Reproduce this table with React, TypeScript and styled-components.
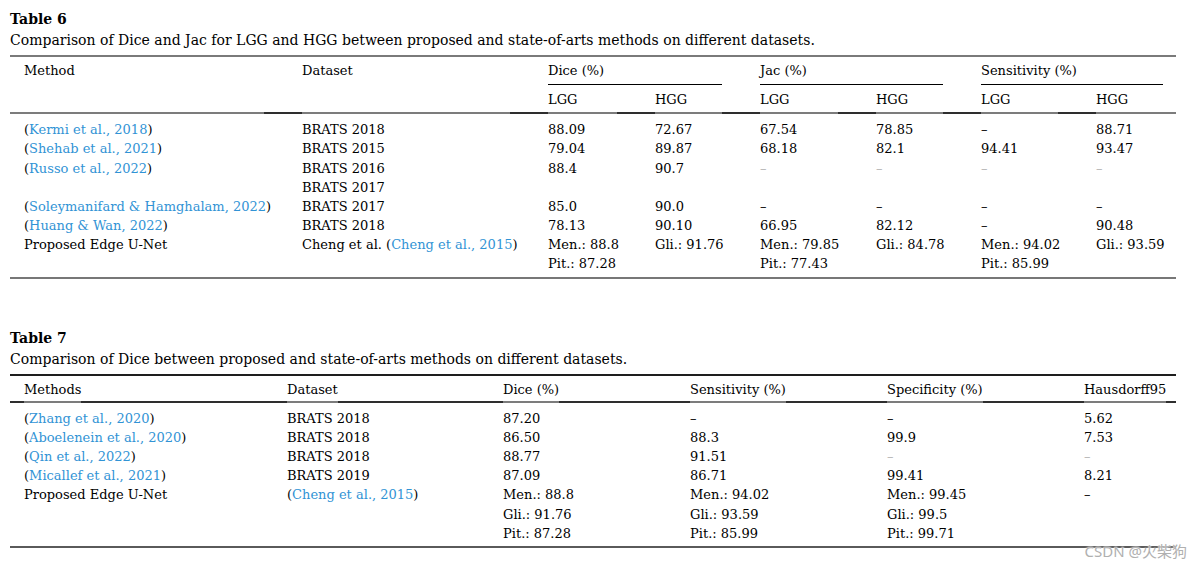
import React from "react";
import styled, { createGlobalStyle } from "styled-components";

const GlobalStyle = createGlobalStyle`
  html, body { margin: 0; padding: 0; background: #fff; }
  body { font-family: "DejaVu Serif", "Liberation Serif", serif; color: #000; }
`;

const Page = styled.main`
  position: relative;
  width: 1199px;
  height: 570px;
  box-sizing: border-box;
  padding: 9px 23px 0 10px;
  overflow: hidden;
`;

const Section = styled.section<{ $gap?: number }>`
  margin-top: ${(p) => p.$gap ?? 0}px;
`;

const Title = styled.h2`
  margin: 0;
  font-size: 14px;
  font-weight: bold;
  line-height: 20px;
`;

const Caption = styled.p`
  margin: 0 0 4px;
  font-size: 14px;
  line-height: 22px;
`;

const Table = styled.table<{ $top: string; $bottom: string }>`
  width: 1166px;
  table-layout: fixed;
  border-collapse: separate;
  border-spacing: 0;
  font-size: 13px;
  line-height: 19.15px;
  border-top: 2px solid ${(p) => p.$top};
  border-bottom: 2px solid ${(p) => p.$bottom};
`;

const Col = styled.col<{ $w: number }>`
  width: ${(p) => p.$w}px;
`;

const HeadCell = styled.th<{
  $pl?: number;
  $pr?: number;
  $pt?: number;
  $pb?: number;
  $rule?: boolean;
  $grayGap?: number | null;
}>`
  text-align: left;
  font-weight: normal;
  vertical-align: top;
  white-space: nowrap;
  padding: ${(p) => p.$pt ?? 0}px ${(p) => p.$pr ?? 38}px ${(p) => p.$pb ?? 0}px
    ${(p) => p.$pl ?? 0}px;
  background: ${(p) =>
    !p.$rule
      ? "none"
      : p.$grayGap == null
      ? "linear-gradient(#2e2e2e, #2e2e2e) left bottom / 100% 2px no-repeat"
      : `linear-gradient(#7c7c7c, #7c7c7c) left bottom / calc(100% - ${p.$grayGap}px) 2px no-repeat,
         linear-gradient(#2e2e2e, #2e2e2e) left bottom / 100% 2px no-repeat`};
`;

const GroupLabel = styled.span`
  display: block;
  padding-bottom: 4px;
  border-bottom: 1px solid #000;
`;

const UnderLabel = styled.span`
  display: inline-block;
  padding-bottom: 4px;
  margin-bottom: -4px;
  background: linear-gradient(#7c7c7c, #7c7c7c) left bottom / 100% 2px no-repeat;
`;

const Body = styled.tbody`
  tr:first-child > td {
    padding-top: 6px;
  }
  tr:last-child > td {
    padding-bottom: 3px;
  }
`;

const Td = styled.td<{ $pl?: number; $pr?: number }>`
  padding: 0 ${(p) => p.$pr ?? 38}px 0 ${(p) => p.$pl ?? 0}px;
  vertical-align: top;
  white-space: nowrap;
`;

const Line = styled.span`
  display: block;
`;

const Cite = styled.a`
  color: #3193d5;
  text-decoration: none;
`;

const Dash = styled.span<{ $faint?: boolean }>`
  color: ${(p) => (p.$faint ? "#b4b4b4" : "#000")};
`;

const Watermark = styled.div`
  position: absolute;
  right: 12px;
  bottom: 9px;
  font-family: "Noto Sans", "Noto Sans CJK SC", sans-serif;
  font-size: 15px;
  line-height: 20px;
  color: #b0b0b0;
  text-shadow: 0 0 2px #fff, 0 0 2px #fff;
`;

const cite = (text: string, pre = "") => (
  <>
    {pre}(<Cite href="#">{text}</Cite>)
  </>
);
const dash = <Dash>–</Dash>;
const faint = <Dash $faint>–</Dash>;

type Cell = React.ReactNode | React.ReactNode[];

function renderCell(c: Cell) {
  if (Array.isArray(c)) return c.map((l, i) => <Line key={i}>{l}</Line>);
  return c;
}

function BodyRows({ rows, lastPr }: { rows: Cell[][]; lastPr: number }) {
  return (
    <Body>
      {rows.map((row, r) => (
        <tr key={r}>
          {row.map((c, i) => (
            <Td key={i} $pl={i === 0 ? 14 : 0} $pr={i === row.length - 1 ? lastPr : 38}>
              {renderCell(c)}
            </Td>
          ))}
        </tr>
      ))}
    </Body>
  );
}

const t6Cols = [292, 246, 107, 105, 116, 105, 115, 80];
const t6Rows: Cell[][] = [
  [cite("Kermi et al., 2018"), "BRATS 2018", "88.09", "72.67", "67.54", "78.85", dash, "88.71"],
  [cite("Shehab et al., 2021"), "BRATS 2015", "79.04", "89.87", "68.18", "82.1", "94.41", "93.47"],
  [cite("Russo et al., 2022"), "BRATS 2016", "88.4", "90.7", faint, faint, faint, faint],
  ["", "BRATS 2017", "", "", "", "", "", ""],
  [cite("Soleymanifard & Hamghalam, 2022"), "BRATS 2017", "85.0", "90.0", dash, dash, dash, dash],
  [cite("Huang & Wan, 2022"), "BRATS 2018", "78.13", "90.10", "66.95", "82.12", dash, "90.48"],
  [
    "Proposed Edge U-Net",
    cite("Cheng et al., 2015", "Cheng et al. "),
    ["Men.: 88.8", "Pit.: 87.28"],
    "Gli.: 91.76",
    ["Men.: 79.85", "Pit.: 77.43"],
    "Gli.: 84.78",
    ["Men.: 94.02", "Pit.: 85.99"],
    "Gli.: 93.59",
  ],
];

const t7Cols = [277, 216, 187, 197, 197, 92];
const t7Head = ["Methods", "Dataset", "Dice (%)", "Sensitivity (%)", "Specificity (%)", "Hausdorff95"];
const t7Rows: Cell[][] = [
  [cite("Zhang et al., 2020"), "BRATS 2018", "87.20", dash, dash, "5.62"],
  [cite("Aboelenein et al., 2020"), "BRATS 2018", "86.50", "88.3", "99.9", "7.53"],
  [cite("Qin et al., 2022"), "BRATS 2018", "88.77", "91.51", faint, faint],
  [cite("Micallef et al., 2021"), "BRATS 2019", "87.09", "86.71", "99.41", "8.21"],
  [
    "Proposed Edge U-Net",
    cite("Cheng et al., 2015"),
    ["Men.: 88.8", "Gli.: 91.76", "Pit.: 87.28"],
    ["Men.: 94.02", "Gli.: 93.59", "Pit.: 85.99"],
    ["Men.: 99.45", "Gli.: 99.5", "Pit.: 99.71"],
    dash,
  ],
];

function Table6() {
  const groups = [
    { label: "Dice (%)", pr: 38 },
    { label: "Jac (%)", pr: 38 },
    { label: "Sensitivity (%)", pr: 13 },
  ];
  return (
    <Section>
      <Title>Table 6</Title>
      <Caption>
        Comparison of Dice and Jac for LGG and HGG between proposed and state-of-arts methods on
        different datasets.
      </Caption>
      <Table $top="#7a7a7a" $bottom="#777">
        <colgroup>
          {t6Cols.map((w, i) => (
            <Col key={i} $w={w} />
          ))}
        </colgroup>
        <thead>
          <tr>
            <HeadCell rowSpan={2} $pl={14} $pt={4} $pb={5} $rule $grayGap={38}>
              Method
            </HeadCell>
            <HeadCell rowSpan={2} $pt={4} $pb={5} $rule $grayGap={38}>
              Dataset
            </HeadCell>
            {groups.map((g) => (
              <HeadCell key={g.label} colSpan={2} $pt={4} $pr={g.pr}>
                <GroupLabel>{g.label}</GroupLabel>
              </HeadCell>
            ))}
          </tr>
          <tr>
            {["LGG", "HGG", "LGG", "HGG", "LGG", "HGG"].map((l, i) => (
              <HeadCell key={i} $pt={5} $pb={5} $pr={i === 5 ? 13 : 38} $rule $grayGap={i === 5 ? 0 : 38}>
                {l}
              </HeadCell>
            ))}
          </tr>
        </thead>
        <BodyRows rows={t6Rows} lastPr={13} />
      </Table>
    </Section>
  );
}

function Table7() {
  return (
    <Section $gap={49}>
      <Title>Table 7</Title>
      <Caption>Comparison of Dice between proposed and state-of-arts methods on different datasets.</Caption>
      <Table $top="#1e1e1e" $bottom="#5a5a5a">
        <colgroup>
          {t7Cols.map((w, i) => (
            <Col key={i} $w={w} />
          ))}
        </colgroup>
        <thead>
          <tr>
            {t7Head.map((h, i) => (
              <HeadCell
                key={h}
                $pl={i === 0 ? 14 : 0}
                $pr={i === t7Head.length - 1 ? 0 : 38}
                $pt={4}
                $pb={4}
                $rule
                $grayGap={null}
              >
                <UnderLabel>{h}</UnderLabel>
              </HeadCell>
            ))}
          </tr>
        </thead>
        <BodyRows rows={t7Rows} lastPr={0} />
      </Table>
    </Section>
  );
}

export default function App() {
  return (
    <>
      <GlobalStyle />
      <Page>
        <Table6 />
        <Table7 />
        <Watermark>CSDN @火柴狗</Watermark>
      </Page>
    </>
  );
}
